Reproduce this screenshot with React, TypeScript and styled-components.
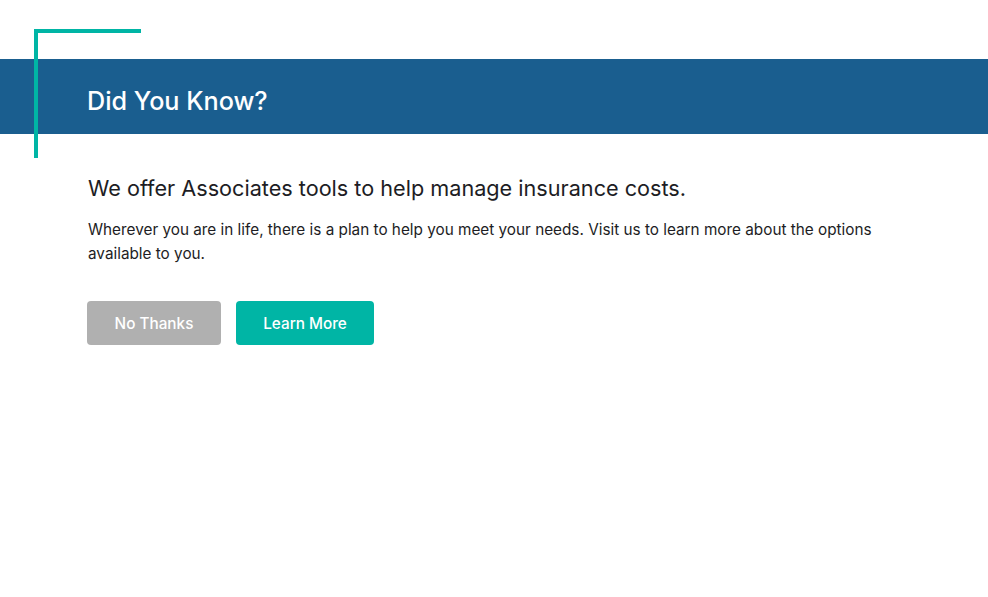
import React from "react";
import styled, { createGlobalStyle } from "styled-components";

const Global = createGlobalStyle`
  html, body { margin: 0; padding: 0; background: #ffffff; }
  body { font-family: Inter, "Open Sans", "Liberation Sans", sans-serif; -webkit-font-smoothing: antialiased; }
`;

const Page = styled.div`
  position: relative;
  width: 988px;
  height: 597px;
  padding-top: 59px;
  box-sizing: border-box;
  background: #ffffff;
`;

const Bracket = styled.div`
  position: absolute;
  left: 34px;
  top: 29px;
  width: 107px;
  height: 129px;
  border-top: 4px solid #00b5a5;
  border-left: 4px solid #00b5a5;
  box-sizing: border-box;
  z-index: 2;
`;

const Banner = styled.div`
  height: 75px;
  box-sizing: border-box;
  background: #1a5e8f;
  display: flex;
  align-items: center;
  padding: 8px 0 0 87px;
`;

const Title = styled.h1`
  margin: 0;
  color: #ffffff;
  font-size: 25.2px;
  font-weight: 500;
  letter-spacing: 0;
`;

const Content = styled.div`
  padding: 39px 0 0 88px;
  max-width: 820px;
`;

const Heading = styled.h2`
  margin: 0;
  font-size: 21.65px;
  line-height: 30px;
  font-weight: 400;
  color: #1d1d24;
`;

const Body = styled.p`
  margin: 15px 0 0;
  font-size: 15.3px;
  line-height: 24px;
  color: #1d1d24;
  max-width: 800px;
`;

const Actions = styled.div`
  display: flex;
  gap: 15px;
  margin-top: 35px;
  margin-left: -1px;
`;

const Button = styled.button<{ $variant: "muted" | "primary"; $w: number }>`
  width: ${(p) => p.$w}px;
  height: 44px;
  border: none;
  border-radius: 4px;
  font-family: inherit;
  font-size: 15.3px;
  font-weight: 500;
  color: #ffffff;
  background: ${(p) => (p.$variant === "primary" ? "#00b5a5" : "#b0b0b0")};
  cursor: pointer;
`;

export default function App() {
  return (
    <>
      <Global />
      <Page>
        <Bracket />
        <Banner>
          <Title>Did You Know?</Title>
        </Banner>
        <Content>
          <Heading>We offer Associates tools to help manage insurance costs.</Heading>
          <Body>
            Wherever you are in life, there is a plan to help you meet your needs. Visit us to learn more about the options available to you.
          </Body>
          <Actions>
            <Button $variant="muted" $w={134}>No Thanks</Button>
            <Button $variant="primary" $w={138}>Learn More</Button>
          </Actions>
        </Content>
      </Page>
    </>
  );
}
